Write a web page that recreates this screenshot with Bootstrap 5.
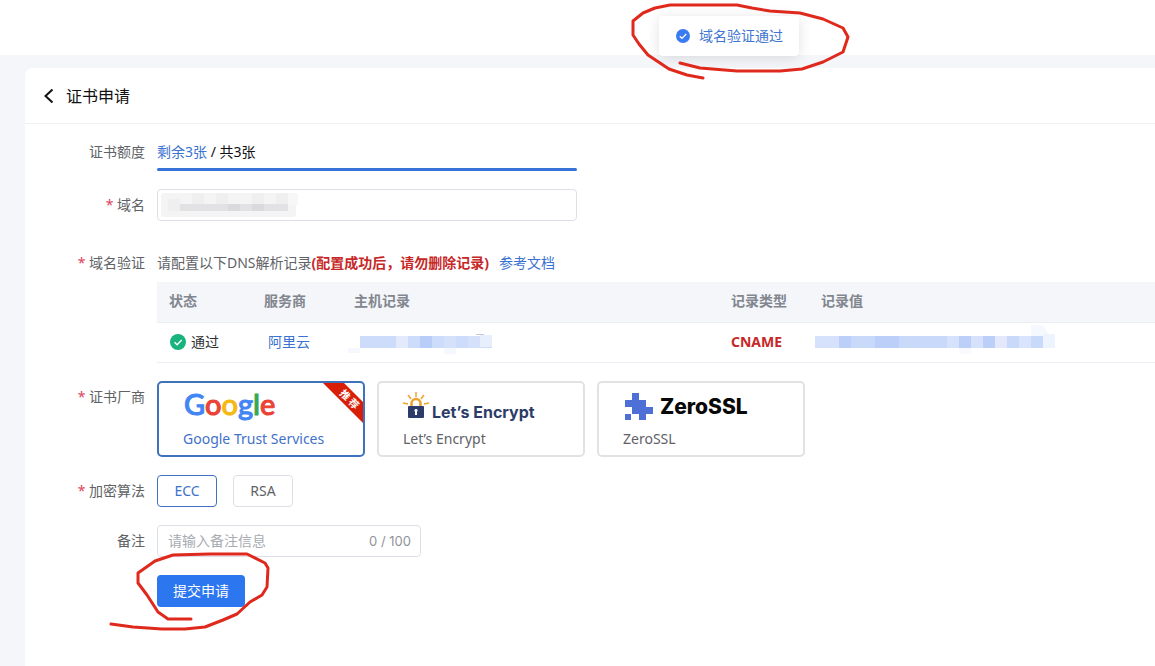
<!DOCTYPE html>
<html lang="zh-CN">
<head>
<meta charset="utf-8">
<meta name="viewport" content="width=device-width, initial-scale=1">
<title>证书申请</title>
<link href="https://cdn.jsdelivr.net/npm/bootstrap@5.3.0/dist/css/bootstrap.min.css" rel="stylesheet">
<style>
  body { background: #f4f6fa; font: 14px/20px "Noto Sans", "Noto Sans CJK SC", sans-serif; color: #606266; overflow-x: hidden; }
  a { color: #3a72d0; text-decoration: none; }
  .topbar { height: 55px; }
  .panel { margin: 13px 0 0 25px; border-radius: 8px 0 0 0; }
  .panel-head { height: 56px; border-bottom: 1px solid #f0f1f4; padding-left: 18px; color: #111; }
  .panel-head h1 { font-size: 16px; line-height: 24px; font-weight: 400; }
  .apply-form { padding-top: 12px; }
  .form-line { display: grid; grid-template-columns: 120px minmax(0, 1fr); column-gap: 12px; margin-bottom: 18px; }
  .field-name { text-align: right; line-height: 32px; }
  .required::before { content: "* "; color: #e0425a; }
  .field { width: 420px; max-width: 100%; }
  .quota-bar { height: 3px; border-radius: 2px; background: #e4e7ed; }
  .quota-bar .progress-bar { background: #3672d8; }
  .quota-text { line-height: 32px; color: #111; }
  .box { height: 32px; border: 1px solid #dcdfe6; border-radius: 4px; font-size: 14px; line-height: 20px; padding: 5px 10px; }
  .box::placeholder { color: #a8abb2; }
  .note-field { width: 264px; }
  .counter { right: 10px; top: 6px; font: 13px/20px "Inter", sans-serif; color: #909399; }
  .mask { left: 4px; top: 4px; }
  .warn { color: #c62828; }
  .doc-link { margin-left: 10px; }
  .records-wrap { padding-top: 3px; }
  .records { min-width: 998px; table-layout: fixed; font-size: 14px; line-height: 20px; }
  .records > :not(caption) > * > * { padding: 0 12px; height: 40px; vertical-align: middle; border-bottom: 1px solid #ebeef5; color: #303133; background: #fff; }
  .records > thead > tr > th { background: #f4f6fa; color: #82868f; font-weight: 700; padding-bottom: 2px; }
  .records > tbody > tr > .masked { padding-left: 6px; }
  .col-a { width: 95px; } .col-b { width: 90px; } .col-c { width: 377px; } .col-d { width: 90px; }
  .vendor { width: 208px; height: 76px; border: 2px solid #e2e2e2; border-radius: 5px; padding: 0 24px; color: #606266; cursor: pointer; }
  .btn-check:checked + .vendor { border-color: #3f72bd; color: #3f72c8; }
  .brand-google { font: 500 29px Lato, sans-serif; stroke-width: 1; }
  .brand-blue { fill: #4285f4; stroke: #4285f4; }
  .brand-red { fill: #ea4335; stroke: #ea4335; }
  .brand-yellow { fill: #f5b912; stroke: #f5b912; }
  .brand-green { fill: #34a853; stroke: #34a853; }
  .brand-lets { font: 700 16px Inter, sans-serif; }
  .brand-zero { font: 800 21px Inter, sans-serif; }
  .algo { min-width: 60px; height: 32px; border: 1px solid #dcdfe6; border-radius: 4px; padding: 5px 16px; font-size: 14px; line-height: 20px; color: #606266; }
  .btn-check:checked + .algo { border-color: #3f72bd; color: #3f72c8; background: #fff; }
  .send { height: 32px; border: 0; border-radius: 4px; padding: 6px 16px; font-size: 14px; line-height: 20px; background: #2c76f0; }
  .notice { top: 16px; left: 659px; width: 140px; height: 40px; border-radius: 4px; color: #3f76cf; box-shadow: 0 2px 14px rgba(0,0,0,.12); z-index: 2; }
  .ribbon { right: 0; top: 0; }
  .ink { left: 0; top: 0; z-index: 3; pointer-events: none; }
</style>
</head>
<body class="position-relative min-vh-100 d-flex flex-column">
<header class="topbar bg-white flex-shrink-0"></header>

<div class="notice position-absolute bg-white d-flex align-items-center justify-content-center gap-2" role="status">
  <svg width="16" height="16" viewBox="0 0 16 16"><circle cx="8" cy="8" r="7" fill="#3a7cf0"/><path d="M4.8 8.2l2.2 2.2 4.2-4.4" fill="none" stroke="#fff" stroke-width="1.3"/></svg>
  <span>域名验证通过</span>
</div>

<main class="panel bg-white flex-grow-1">
  <div class="panel-head d-flex align-items-center gap-2">
    <button class="btn p-0 border-0 d-flex" type="button" aria-label="返回"><svg width="15" height="16" viewBox="0 0 15 16"><path d="M9.500 1.500L2.500 8l7 6.500" fill="none" stroke="#111" stroke-width="2"/></svg></button>
    <h1 class="m-0">证书申请</h1>
  </div>

  <form class="apply-form">
    <div class="form-line">
      <span class="field-name" id="quota">证书额度</span>
      <div class="field">
        <div class="quota-text"><a href="#">剩余3张</a> / 共3张</div>
        <div class="progress quota-bar" role="progressbar" aria-labelledby="quota" aria-valuenow="100" aria-valuemin="0" aria-valuemax="100"><div class="progress-bar w-100"></div></div>
      </div>
    </div>

    <div class="form-line">
      <label class="field-name required" for="domain">域名</label>
      <div class="field position-relative">
        <input class="form-control box" id="domain" type="text">
        <svg class="mask position-absolute" width="138" height="24" viewBox="0 0 138 24" aria-hidden="true">
          <rect width="135" height="24" rx="3" fill="#f4f4f5"/>
          <path d="M7 6h12v12H7zM31 0h12v11H31zM55 0h12v11H55zM91 0h12v11H91zM115 0h12v11h-12z" fill="#efeff0"/>
          <path d="M127 0h10v12h-10z" fill="#f7f7f8"/>
          <path d="M19 11h108v7H19z" fill="#e2e2e4"/>
          <path d="M67 11h12v7H67zM91 11h12v7H91z" fill="#dadadc"/>
        </svg>
      </div>
    </div>

    <div class="form-line pt-2">
      <span class="field-name required">域名验证</span>
      <div>
        <div class="field-name text-start">请配置以下DNS解析记录<strong class="warn">(配置成功后，请勿删除记录)</strong><a class="doc-link" href="#">参考文档</a></div>
        <div class="overflow-hidden records-wrap">
        <table class="table records m-0">
          <thead><tr><th class="col-a">状态</th><th class="col-b">服务商</th><th class="col-c">主机记录</th><th class="col-d">记录类型</th><th>记录值</th></tr></thead>
          <tbody><tr>
            <td><span class="d-flex align-items-center gap-1"><svg width="18" height="18" viewBox="0 0 18 18"><circle cx="9" cy="9" r="8" fill="#19b47d"/><path d="M5.500 9.200l2.600 2.500 4.600-4.800" fill="none" stroke="#fff" stroke-width="1.400"/></svg>通过</span></td>
            <td class="ps-3"><a href="#">阿里云</a></td>
            <td class="masked"><svg class="d-block" width="144" height="24" viewBox="-12 -6 144 24" role="img" aria-label="主机记录已隐藏">
              <path d="M0 0h132v12H0z" fill="#ccdcfa"/><path d="M36 0h12v12H36z" fill="#e3eafb"/><path d="M60 0h12v12H60z" fill="#b8cdf7"/><path d="M84 0h12v12H84zM108 0h12v12h-12z" fill="#d5e1fa"/><path d="M120-1h12v12h-12z" fill="#e7effd"/><path d="M116-2h8v1h-8z" fill="#c2c8d8"/><path d="M-12 12H0v5h-12zM84 12h12v6H84z" fill="#f5f8fe"/></svg></td>
            <td><strong class="warn">CNAME</strong></td>
            <td class="masked"><svg class="d-block" width="240" height="36" viewBox="0 -12 240 36" role="img" aria-label="记录值已隐藏">
              <path d="M0 0h240v12H0z" fill="#c9d9fa"/><path d="M0 0h24v12H0zM132 0h12v12h-12zM156 0h12v12h-12z" fill="#d6e2fb"/><path d="M24 0h12v12H24zM60 0h24v12H60zM144 0h12v12h-12zM168 0h12v12h-12z" fill="#bbcff8"/><path d="M180 0h12v12h-12z" fill="#e3e9fb"/><path d="M204 0h12v12h-12z" fill="#d8e5fd"/><path d="M228-2h12v14h-12z" fill="#edf4fe"/><path d="M216-11h12l6 9h-6v2h-12z" fill="#f5f8fe"/><path d="M144 12h12v6h-12z" fill="#f8fafe"/></svg></td>
          </tr></tbody>
        </table>
        </div>
      </div>
    </div>

    <div class="form-line">
      <span class="field-name required">证书厂商</span>
      <div class="d-flex flex-wrap">
        <div class="me-2 pe-1">
          <input class="btn-check" type="radio" name="vendor" id="google" checked>
          <label class="vendor d-block position-relative" for="google">
            <svg class="d-block overflow-visible" width="156" height="46" viewBox="0 -6 156 46"><text class="brand-google brand-blue" x="1" y="26">G<tspan class="brand-red">o</tspan><tspan class="brand-yellow">o</tspan><tspan>g</tspan><tspan class="brand-green">l</tspan><tspan class="brand-red">e</tspan></text></svg>
            <span>Google Trust Services</span>
            <svg class="ribbon position-absolute" width="40" height="40" viewBox="0 0 40 40"><path d="M0 0h21l19 19v21z" fill="#d81e06"/><text transform="translate(24 19) rotate(45)" text-anchor="middle" font-family="Noto Sans CJK SC" font-size="10" font-weight="700" fill="#fff">推 荐</text></svg>
          </label>
        </div>
        <div class="me-2 pe-1">
          <input class="btn-check" type="radio" name="vendor" id="lets">
          <label class="vendor d-block" for="lets">
            <svg class="d-block overflow-visible" width="156" height="46" viewBox="0 -6 156 46"><rect x="5" y="17" width="16" height="12" rx="1" fill="#2c3c69"/><path d="M8.500 17v-2.500a4.500 4.500 0 0 1 9 0V17" fill="none" stroke="#eda42f" stroke-width="2.600"/><path d="M13 3v5M5 6l3 4M21 6l-3 4M0 14l5 1M26 14l-5 1" stroke="#eda42f" stroke-width="1.500"/><path d="M13 20a1.500 1.500 0 0 1 1 2.700V26h-2v-3.300a1.500 1.500 0 0 1 1-2.700z" fill="#fff"/><text class="brand-lets" x="29" y="29" fill="#2c3c69">Let’s Encrypt</text></svg>
            <span>Let’s Encrypt</span>
          </label>
        </div>
        <div>
          <input class="btn-check" type="radio" name="vendor" id="zero">
          <label class="vendor d-block" for="zero">
            <svg class="d-block overflow-visible" width="156" height="46" viewBox="0 -6 156 46"><path d="M9 4h7v7h7v7h7v7h-7v6h-7v-6H9v-7H2v-7h7zM2 25h6v6H2z" fill="#4d6fd6"/><text class="brand-zero" x="37" y="25" fill="#080808">ZeroSSL</text></svg>
            <span>ZeroSSL</span>
          </label>
        </div>
      </div>
    </div>

    <div class="form-line">
      <span class="field-name required">加密算法</span>
      <div class="d-flex gap-3">
        <div><input class="btn-check" type="radio" name="algo" id="ecc" checked><label class="btn algo" for="ecc">ECC</label></div>
        <div><input class="btn-check" type="radio" name="algo" id="rsa"><label class="btn algo" for="rsa">RSA</label></div>
      </div>
    </div>

    <div class="form-line">
      <label class="field-name" for="note">备注</label>
      <div class="note-field position-relative">
        <input class="form-control box" id="note" type="text" maxlength="100" placeholder="请输入备注信息">
        <span class="counter position-absolute">0 / 100</span>
      </div>
    </div>

    <div class="form-line mb-0">
      <span></span>
      <div><button class="btn btn-primary send" type="button">提交申请</button></div>
    </div>
  </form>
</main>

<svg class="ink position-absolute" width="860" height="640" viewBox="0 0 860 640" fill="none" stroke="#e0291d" stroke-width="3" stroke-linejoin="round" stroke-linecap="round" aria-hidden="true">
  <path d="M703 78L687 75 669 69 648 55 639 44 633 35V21L643 13 655 8 670 5H737L752 8 770 11 800 13 823 19 843 28 848 37 843 52 823 62 802 69 780 71H737L700 68 680 63"/>
  <path d="M191 619H168L158 612 147 595 138 583V573L155 561 173 555 210 554H247L265 563 268 568 267 587 262 595 250 602 237 614 223 620 205 627 185 629H162L133 627 111 624"/>
</svg>
<script src="https://cdn.jsdelivr.net/npm/bootstrap@5.3.0/dist/js/bootstrap.bundle.min.js"></script>
</body>
</html>
